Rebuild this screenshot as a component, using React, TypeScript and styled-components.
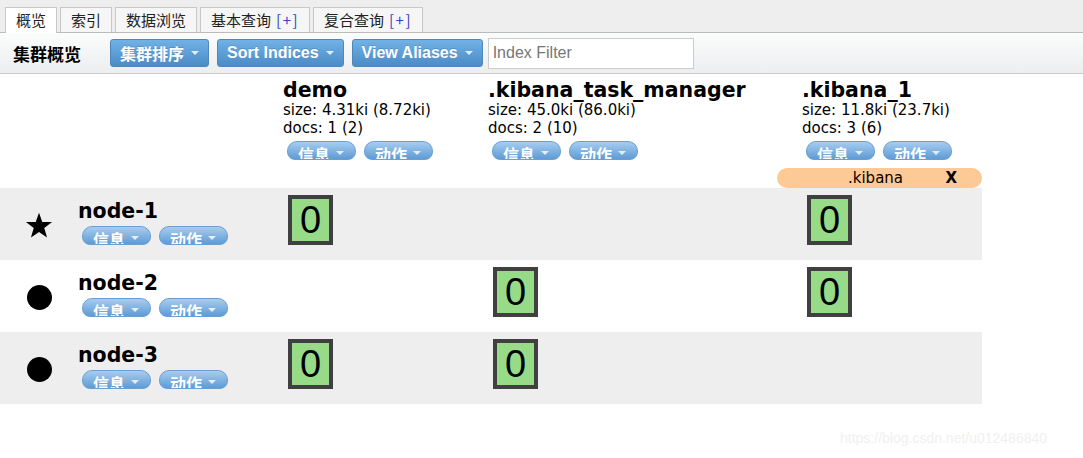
import React from "react";
import styled, { createGlobalStyle } from "styled-components";

const GlobalStyle = createGlobalStyle`
  body {
    margin: 0;
    background: #fff;
    font-family: "DejaVu Sans", "Noto Sans CJK SC", sans-serif;
    color: #000;
  }
`;

const Page = styled.div`
  position: relative;
  width: 1083px;
  height: 458px;
  overflow: hidden;
`;

// tabs
const TabBar = styled.div`
  display: flex;
  align-items: flex-end;
  gap: 3px;
  padding-left: 5px;
  background: #eee;
  border-bottom: 1px solid #bbb;
  box-sizing: border-box;
  height: 33px;
`;

const Tab = styled.div<{ $active?: boolean }>`
  line-height: 24px;
  padding: 0 10px;
  border: 1px solid #c8c8c8;
  border-bottom: none;
  margin-bottom: ${(p) => (p.$active ? "-1px" : "0")};
  height: ${(p) => (p.$active ? "25px" : "24px")};
  background: ${(p) => (p.$active ? "#fff" : "#f6f6f6")};
  font-family: "Noto Sans CJK SC", sans-serif;
  font-size: 15px;
  color: #222;
`;

const Plus = styled.span`
  color: #3340c8;
  letter-spacing: 1.5px;
  margin-left: 5px;
`;

// toolbar
const Toolbar = styled.div`
  display: flex;
  align-items: center;
  height: 40px;
  padding-left: 13px;
  background: linear-gradient(#fbfcfc, #eceeef);
  border-bottom: 1px solid #ccc;
`;

const ToolTitle = styled.div`
  font-family: "Noto Sans CJK SC", sans-serif;
  font-weight: 700;
  font-size: 17px;
  margin-right: 29px;
`;

const ToolButton = styled.div`
  display: flex;
  align-items: center;
  gap: 7px;
  height: 28px;
  padding: 0 9px;
  margin-right: 8px;
  box-sizing: border-box;
  border: 1px solid #4f86bb;
  border-radius: 3px;
  background: linear-gradient(#70b1e6, #4b8cc7);
  color: #fff;
  font-family: "Liberation Sans", "Noto Sans CJK SC", sans-serif;
  font-weight: 700;
  font-size: 16px;
  text-shadow: 0 -1px 0 rgba(0, 0, 0, 0.15);
`;

const Caret = styled.span<{ $size?: number }>`
  display: inline-block;
  width: 0;
  height: 0;
  border-left: ${(p) => p.$size ?? 4}px solid transparent;
  border-right: ${(p) => p.$size ?? 4}px solid transparent;
  border-top: ${(p) => p.$size ?? 4}px solid #e4eef8;
`;

const Filter = styled.input`
  width: 206px;
  height: 31px;
  box-sizing: border-box;
  margin-left: -3px;
  border: 1px solid #ccc;
  padding: 0 4px;
  font-family: "Liberation Sans", sans-serif;
  font-size: 16px;
  background: #fff;
  &::placeholder {
    color: #777;
  }
`;

// cluster table
const Grid = styled.div`
  display: grid;
  grid-template-columns: 78px 205px 205px 314px 180px;
  width: 982px;
`;

const HeadCell = styled.div`
  padding-top: 5px;
`;

const IndexName = styled.div`
  font-weight: 700;
  font-size: 20.5px;
  line-height: 22px;
  white-space: nowrap;
`;

const Stat = styled.div`
  font-size: 15px;
  line-height: 18px;
  white-space: nowrap;
`;

const Pills = styled.div`
  display: flex;
  gap: 8px;
  margin-top: 4px;
  padding-left: 4px;
`;

// the menu pills are cut off at the bottom in the original, text included
const Pill = styled.div`
  display: flex;
  align-items: flex-start;
  gap: 6px;
  width: 69px;
  height: 19px;
  box-sizing: border-box;
  padding: 3px 0 0 10px;
  border: 1px solid #6a9fd2;
  border-radius: 10px 10px 8px 8px;
  background: linear-gradient(#a6cdef, #5f9bd5);
  overflow: hidden;
  color: #fff;
  font-family: "Noto Sans CJK SC", sans-serif;
  font-weight: 700;
  font-size: 16px;
  line-height: 18px;
  span:last-child {
    margin-top: 6px;
  }
`;

const AliasRow = styled.div`
  grid-column: 5;
  margin-top: 8px;
  margin-left: -25px;
  display: flex;
  align-items: center;
  height: 20px;
  padding: 0 25px 0 71px;
  background: #fdc996;
  border-radius: 10px;
  font-size: 15px;
`;

const AliasClose = styled.span`
  margin-left: auto;
  font-weight: 700;
  font-size: 15px;
`;

const RowCell = styled.div<{ $shade: boolean }>`
  height: 72px;
  background: ${(p) => (p.$shade ? "#eee" : "#fff")};
`;

const IconCell = styled(RowCell)`
  display: flex;
  align-items: center;
  justify-content: center;
  padding-top: 3px;
  box-sizing: border-box;
`;

const Dot = styled.div`
  width: 25px;
  height: 25px;
  border-radius: 50%;
  background: #000;
`;

const NodeCell = styled(RowCell)`
  padding-top: 12px;
  box-sizing: border-box;
`;

const ShardCell = styled(RowCell)`
  padding: 7px 0 0 5px;
  box-sizing: border-box;
`;

const Shard = styled.div`
  width: 45px;
  height: 50px;
  box-sizing: border-box;
  border: 4px solid #404040;
  background: #97db88;
  display: flex;
  align-items: center;
  justify-content: center;
  font-family: "Liberation Sans", sans-serif;
  font-size: 38px;
  line-height: 1;
`;

const Watermark = styled.div`
  position: absolute;
  left: 840px;
  top: 430px;
  font-family: "Liberation Sans", sans-serif;
  font-size: 14px;
  color: #f0f0f0;
`;

const Star = () => (
  <svg width="28" height="27" viewBox="0 0 24 23">
    <polygon
      points="12,0.5 14.8,8.4 23.2,8.6 16.5,13.7 18.9,21.8 12,17 5.1,21.8 7.5,13.7 0.8,8.6 9.2,8.4"
      fill="#000"
    />
  </svg>
);

const MenuPills = () => (
  <Pills>
    <Pill>
      <span>信息</span>
      <Caret />
    </Pill>
    <Pill>
      <span>动作</span>
      <Caret />
    </Pill>
  </Pills>
);

const indices = [
  { name: "demo", size: "4.31ki (8.72ki)", docs: "1 (2)" },
  { name: ".kibana_task_manager", size: "45.0ki (86.0ki)", docs: "2 (10)" },
  { name: ".kibana_1", size: "11.8ki (23.7ki)", docs: "3 (6)" },
];

const nodes = [
  { name: "node-1", master: true, shards: [true, false, true] },
  { name: "node-2", master: false, shards: [false, true, true] },
  { name: "node-3", master: false, shards: [true, true, false] },
];

const App: React.FC = () => {
  return (
    <Page>
      <GlobalStyle />
      <TabBar>
        <Tab $active>概览</Tab>
        <Tab>索引</Tab>
        <Tab>数据浏览</Tab>
        <Tab>
          基本查询<Plus>[+]</Plus>
        </Tab>
        <Tab>
          复合查询<Plus>[+]</Plus>
        </Tab>
      </TabBar>
      <Toolbar>
        <ToolTitle>集群概览</ToolTitle>
        <ToolButton>
          集群排序 <Caret />
        </ToolButton>
        <ToolButton>
          Sort Indices <Caret />
        </ToolButton>
        <ToolButton>
          View Aliases <Caret />
        </ToolButton>
        <Filter placeholder="Index Filter" />
      </Toolbar>
      <Grid>
        <div />
        <div />
        {indices.map((ix) => (
          <HeadCell key={ix.name}>
            <IndexName>{ix.name}</IndexName>
            <Stat>size: {ix.size}</Stat>
            <Stat>docs: {ix.docs}</Stat>
            <MenuPills />
          </HeadCell>
        ))}
        <AliasRow>
          <span>.kibana</span>
          <AliasClose>X</AliasClose>
        </AliasRow>
        {nodes.map((n, i) => {
          const shade = i % 2 === 0;
          return (
            <React.Fragment key={n.name}>
              <IconCell $shade={shade}>{n.master ? <Star /> : <Dot />}</IconCell>
              <NodeCell $shade={shade}>
                <IndexName>{n.name}</IndexName>
                <MenuPills />
              </NodeCell>
              {n.shards.map((has, j) => (
                <ShardCell $shade={shade} key={j}>
                  {has && <Shard>0</Shard>}
                </ShardCell>
              ))}
            </React.Fragment>
          );
        })}
      </Grid>
      <Watermark>https://blog.csdn.net/u012486840</Watermark>
    </Page>
  );
};

export default App;
